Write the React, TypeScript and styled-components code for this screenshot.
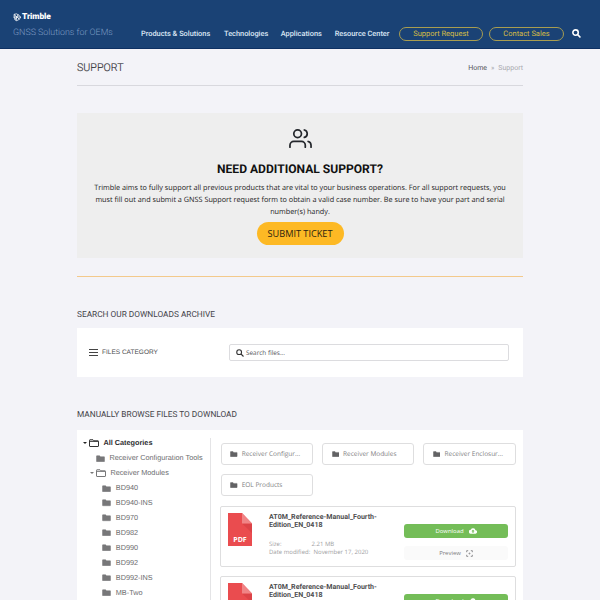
import React from 'react';
import styled, { createGlobalStyle } from 'styled-components';

const GlobalStyle = createGlobalStyle`
  *, *::before, *::after { box-sizing: border-box; }
  body { margin: 0; background: #f3f3f8; text-rendering: geometricPrecision; }
`;

const sans = '"Roboto", sans-serif';
const body = '"Open Sans", sans-serif';
const arial = '"Liberation Sans", sans-serif';

const Page = styled.div`
  width: 600px;
  height: 600px;
  overflow: hidden;
  background: #f3f3f8;
  font-family: ${sans};
  white-space: nowrap;
`;

const Header = styled.header`
  height: 49px;
  padding: 0 19px 0 13px;
  display: flex;
  background: #1a4275;
  border-bottom: 1px solid #0d3063;
`;

const Brand = styled.div`
  width: 128px;
  padding-top: 11px;
`;

const Logo = styled.div`
  height: 13px;
  display: flex;
  align-items: center;
  gap: 0.5px;
  color: #fff;
  font: 900 8.4px/13px ${sans};
  letter-spacing: -0.06px;
  svg { flex: none; }
`;

const Tagline = styled.div`
  margin-top: 3px;
  color: #7d9bc2;
  font: 300 8.89px/13px ${sans};
`;

const Nav = styled.nav`
  flex: 1;
  height: 15px;
  margin-top: 26px;
  display: flex;
  align-items: center;
`;

const NavLink = styled.a<{ $width: number }>`
  width: ${(p) => p.$width}px;
  color: #dde8f5;
  font: 500 7.38px/14px ${sans};
`;

const PillLink = styled.a<{ $width: number }>`
  width: ${(p) => p.$width}px;
  height: 14px;
  margin-right: 6px;
  border: 1px solid #a89d50;
  border-radius: 7px;
  color: #d5bd45;
  font: 400 7.5px/12px ${sans};
  text-align: center;
`;

const NavSearch = styled.span`
  margin-left: 2px;
  display: flex;
`;

const Main = styled.main`
  width: 446px;
  margin: 0 auto;
`;

const TitleBar = styled.div`
  height: 37px;
  padding-top: 2px;
  display: flex;
  align-items: center;
  justify-content: space-between;
  border-bottom: 1px solid #d8d8de;
`;

const PageTitle = styled.h1`
  margin: 0;
  color: #333338;
  font: 300 10.7px/16px ${sans};
  -webkit-text-stroke: 0.15px #333338;
`;

const Crumbs = styled.div`
  display: flex;
  gap: 4px;
  color: #a9a9af;
  font: 400 7px/12px ${sans};
`;

const CrumbHome = styled.span`
  color: #55555a;
`;

const SupportBox = styled.section`
  height: 145px;
  margin-top: 27px;
  padding: 14px 12px 0;
  display: flex;
  flex-direction: column;
  align-items: center;
  background: #eeeeee;
  color: #1c1c1c;
`;

const SupportHeading = styled.h2`
  margin: 12px 0 5px;
  color: #111;
  font: 700 12.08px/15px ${sans};
`;

const SupportText = styled.p`
  margin: 0;
  font: 400 7.27px/12px ${body};
  text-align: center;
`;

const TicketButton = styled.button`
  width: 87px;
  height: 23px;
  margin-top: 4px;
  padding: 0;
  border: 0;
  border-radius: 12px;
  background: #fdb924;
  color: #2a2210;
  font: 400 9.17px/23px ${body};
`;

const Divider = styled.hr`
  height: 1px;
  margin: 18px 0 0;
  border: 0;
  background: #f3c98b;
`;

const SectionTitle = styled.h3<{ $top: number; $bottom: number }>`
  margin: ${(p) => p.$top}px 0 ${(p) => p.$bottom}px;
  color: #45454a;
  font: 400 8.3px/14px ${sans};
`;

const SearchPanel = styled.section`
  height: 49px;
  padding: 0 14px 0 12px;
  display: flex;
  align-items: center;
  background: #fff;
`;

const FilesCategory = styled.div`
  width: 140px;
  display: flex;
  align-items: center;
  gap: 4px;
  color: #4d4d50;
  font: 400 6.53px/12px ${arial};
`;

const Burger = styled.span`
  width: 9px;
  height: 7px;
  border: solid #444;
  border-width: 1px 0;
  display: flex;
  align-items: center;
  &::before {
    content: '';
    width: 9px;
    height: 1px;
    background: #444;
  }
`;

const SearchField = styled.div`
  flex: 1;
  height: 17px;
  padding-left: 6px;
  display: flex;
  align-items: center;
  gap: 2px;
  border: 1px solid #dcdcdf;
  border-radius: 2px;
  color: #55555a;
  font: 400 6.4px/12px ${body};
`;

const BrowsePanel = styled.section`
  height: 200px;
  display: flex;
  background: #fff;
`;

const Tree = styled.ul`
  width: 134px;
  margin: 6px 0 0;
  padding: 0;
  list-style: none;
`;

const TreeRow = styled.li<{ $indent: number; $strong?: boolean }>`
  height: 14.92px;
  padding-left: ${(p) => p.$indent}px;
  display: flex;
  align-items: center;
  color: ${(p) => (p.$strong ? '#2d2d2f' : '#6e6e70')};
  font: ${(p) => (p.$strong ? 700 : 400)} 7.3px/12px ${arial};
  svg { margin-right: 4.4px; }
`;

const Caret = styled.span<{ $small?: boolean }>`
  margin-right: 2px;
  border: solid transparent;
  border-width: ${(p) => (p.$small ? '2px 2px 0' : '2.5px 2.5px 0')};
  border-top-color: ${(p) => (p.$small ? '#777' : '#222')};
`;

const Files = styled.div`
  flex: 1;
  margin-top: 8px;
  padding: 5px 7px 0 9px;
  border-left: 1px solid #e4e4e6;
`;

const FolderGrid = styled.div`
  margin: 0 -0.6px 10px 0.6px;
  display: grid;
  grid-template-columns: repeat(3, 92.4px);
  grid-auto-rows: 22px;
  gap: 9px;
`;

const FolderCard = styled.div`
  padding-left: 8.6px;
  display: flex;
  align-items: center;
  gap: 4px;
  border: 1px solid #dededf;
  border-radius: 3px;
  color: #828284;
  font: 400 6.5px/12px ${body};
`;

const FileCard = styled.article`
  height: 61px;
  margin-bottom: 9px;
  padding: 6px 7px 0;
  display: flex;
  border: 1px solid #dededf;
  border-radius: 2px;
`;

const FileInfo = styled.div`
  width: 135px;
  margin-left: 17px;
`;

const FileName = styled.h4`
  margin: 0 0 10.5px;
  color: #505052;
  font: 700 7.09px/8px ${sans};
`;

const FileMeta = styled.div<{ $label: number }>`
  display: grid;
  grid-template-columns: ${(p) => p.$label}px auto;
  color: #a0a0a2;
  font: 400 6px/8.5px ${body};
`;

const FileActions = styled.div`
  width: 104px;
  padding-top: 11px;
  display: grid;
  grid-auto-rows: 14px;
  align-content: start;
  gap: 8px;
`;

const ActionButton = styled.button<{ $primary?: boolean }>`
  padding: 0;
  display: flex;
  align-items: center;
  justify-content: center;
  gap: 5px;
  border: 0;
  border-radius: 3px;
  background: ${(p) => (p.$primary ? '#74bd58' : '#fafafa')};
  color: ${(p) => (p.$primary ? '#fff' : '#808083')};
  font: 400 5.95px/14px ${body};
`;

const LogoMark = () => (
  <svg width="8.5" height="8.5" viewBox="0 0 16 16" fill="none" stroke="#fff" strokeWidth="1.5">
    <path d="M2 2.5Q7 0 11 4Q15 8 14 9Q11 14 6 14.5Q2 13 2 2.5ZM2 3L7 7L15 8M7 7L6 14M7 7L10 3M1 8L7 7L12 12M4 12L7 7" />
  </svg>
);

const UsersIcon = () => (
  <svg width="23" height="23" viewBox="0 0 24 24" fill="none" stroke="#24272c" strokeWidth="1.8" strokeLinecap="round" strokeLinejoin="round">
    <path d="M17 21v-2a4 4 0 0 0-4-4H5a4 4 0 0 0-4 4v2M23 21v-2a4 4 0 0 0-3-3.87M16 3.13a4 4 0 0 1 0 7.75" />
    <circle cx="9" cy="7" r="4" />
  </svg>
);

const SearchIcon = ({ size, color, weight }: { size: number; color: string; weight: number }) => (
  <svg width={size} height={size} viewBox="0 0 16 16" fill="none" stroke={color} strokeWidth={weight}>
    <circle cx="6.3" cy="6.3" r="4.8" />
    <path d="M10 10l5 5" />
  </svg>
);

const Folder = ({ size = 9, open = false, color = '#777779' }: { size?: number; open?: boolean; color?: string }) => (
  <svg width={size} height={size * 0.8} viewBox="0 0 20 16">
    <path
      d="M2 1.5h6l2 2.2h8q1 0 1 1V14q0 1-1 1H2q-1 0-1-1V2.5q0-1 1-1Z"
      fill={open ? 'none' : color}
      stroke={color}
      strokeWidth={open ? 2 : 1}
    />
    {open && <path d="M1 4.7h18" stroke={color} strokeWidth="2" />}
  </svg>
);

const PdfLabel = styled.text`
  fill: #fff;
  font: 700 7px ${body};
  text-anchor: middle;
`;

const PdfIcon = () => (
  <svg width="24" height="33" viewBox="0 0 24 33">
    <path d="M0 0h14l10 10.5V33H0z" fill="#ea4c4f" />
    <path d="M14 10.5h10V20z" fill="#dc4347" />
    <path d="M14 0l10 10.5H14z" fill="#f08486" />
    <PdfLabel x="12" y="29">PDF</PdfLabel>
  </svg>
);

const CloudIcon = () => (
  <svg width="8" height="8" viewBox="0 0 24 24">
    <path fill="#fff" d="M19.4 10A7.5 7.5 0 0 0 5.4 8 6 6 0 0 0 6 20h13a5 5 0 0 0 .4-10Z" />
    <path fill="#74bd58" d="M10 17h4v-4h3l-5-5-5 5h3z" />
  </svg>
);

const FocusIcon = () => (
  <svg width="7" height="7" viewBox="0 0 16 16" fill="none" stroke="#78787b" strokeWidth="1.8">
    <path d="M1.5 5V1.5H5M11 1.5h3.5V5M14.5 11v3.5H11M5 14.5H1.5V11" />
    <circle cx="8" cy="8" r="1.2" />
  </svg>
);

const navLinks: [string, number][] = [
  ['Products & Solutions', 83],
  ['Technologies', 56.7],
  ['Applications', 54],
  ['Resource Center', 64.3],
];
const modules = ['BD940', 'BD940-INS', 'BD970', 'BD982', 'BD990', 'BD992', 'BD992-INS', 'MB-Two'];
const folders = ['Receiver Configur...', 'Receiver Modules', 'Receiver Enclosur...', 'EOL Products'];

const FileItem = () => (
  <FileCard>
    <PdfIcon />
    <FileInfo>
      <FileName>AT0M_Reference-Manual_Fourth-<br />Edition_EN_0418</FileName>
      <FileMeta $label={42.5}><span>Size:</span><span>2.21 MB</span></FileMeta>
      <FileMeta $label={44.5}><span>Date modified:</span><span>November 17, 2020</span></FileMeta>
    </FileInfo>
    <FileActions>
      <ActionButton $primary>Download<CloudIcon /></ActionButton>
      <ActionButton>Preview<FocusIcon /></ActionButton>
    </FileActions>
  </FileCard>
);

export default function App() {
  return (
    <Page>
      <GlobalStyle />
      <Header>
        <Brand>
          <Logo><LogoMark />Trimble</Logo>
          <Tagline>GNSS Solutions for OEMs</Tagline>
        </Brand>
        <Nav>
          {navLinks.map(([label, width]) => (
            <NavLink key={label} $width={width}>{label}</NavLink>
          ))}
          <PillLink $width={84}>Support Request</PillLink>
          <PillLink $width={75}>Contact Sales</PillLink>
          <NavSearch><SearchIcon size={9} color="#fff" weight={2.8} /></NavSearch>
        </Nav>
      </Header>
      <Main>
        <TitleBar>
          <PageTitle>SUPPORT</PageTitle>
          <Crumbs><CrumbHome>Home</CrumbHome><span>»</span><span>Support</span></Crumbs>
        </TitleBar>
        <SupportBox>
          <UsersIcon />
          <SupportHeading>NEED ADDITIONAL SUPPORT?</SupportHeading>
          <SupportText>
            Trimble aims to fully support all previous products that are vital to your business operations. For all support requests, you<br />
            must fill out and submit a GNSS Support request form to obtain a valid case number. Be sure to have your part and serial<br />
            number(s) handy.
          </SupportText>
          <TicketButton>SUBMIT TICKET</TicketButton>
        </SupportBox>
        <Divider />
        <SectionTitle $top={31} $bottom={6}>SEARCH OUR DOWNLOADS ARCHIVE</SectionTitle>
        <SearchPanel>
          <FilesCategory><Burger />FILES CATEGORY</FilesCategory>
          <SearchField><SearchIcon size={8} color="#333" weight={2.2} />Search files...</SearchField>
        </SearchPanel>
        <SectionTitle $top={31} $bottom={8}>MANUALLY BROWSE FILES TO DOWNLOAD</SectionTitle>
        <BrowsePanel>
          <Tree>
            <TreeRow $indent={6} $strong><Caret /><Folder size={10} open color="#333" />All Categories</TreeRow>
            <TreeRow $indent={19}><Folder />Receiver Configuration Tools</TreeRow>
            <TreeRow $indent={13}><Caret $small /><Folder size={10} open />Receiver Modules</TreeRow>
            {modules.map((name) => (
              <TreeRow key={name} $indent={25.4}><Folder />{name}</TreeRow>
            ))}
          </Tree>
          <Files>
            <FolderGrid>
              {folders.map((name) => (
                <FolderCard key={name}><Folder size={7.5} color="#626264" />{name}</FolderCard>
              ))}
            </FolderGrid>
            <FileItem />
            <FileItem />
          </Files>
        </BrowsePanel>
      </Main>
    </Page>
  );
}
